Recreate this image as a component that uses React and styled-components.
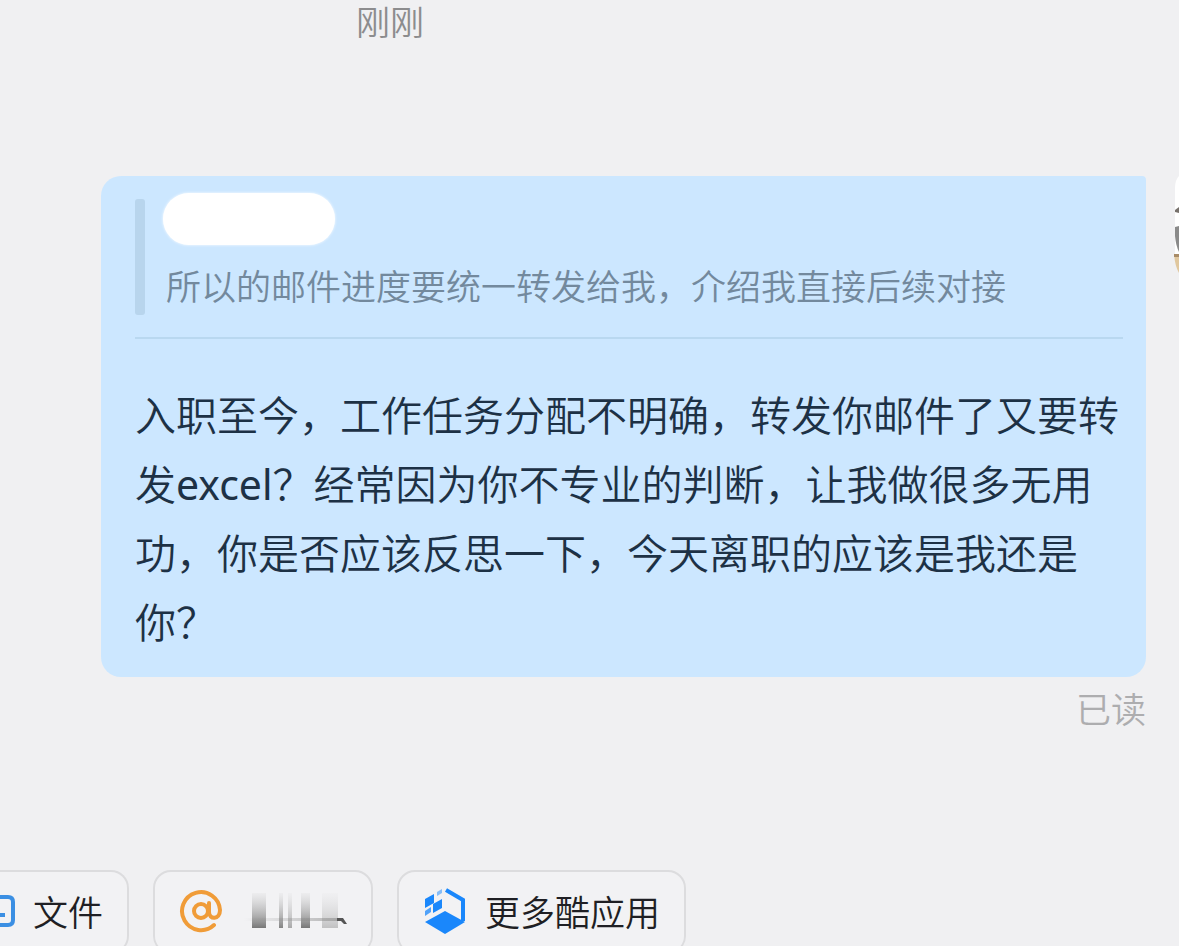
import React from "react";
import styled, { createGlobalStyle } from "styled-components";

const GlobalStyle = createGlobalStyle`
  * { box-sizing: border-box; }
  html, body { margin: 0; background: #f0f0f2; }
  body {
    font-family: "Noto Sans", "Noto Sans CJK SC", sans-serif;
    font-weight: 350;
    overflow: hidden;
  }
`;

const Page = styled.main`
  height: 100vh;
  display: flex;
  flex-direction: column;
  overflow: hidden;
`;

const Time = styled.time`
  padding-left: 356px;
  font-size: 34px;
  line-height: 44px;
  color: #8c8c8e;
`;

const MessageRow = styled.section`
  display: flex;
  gap: 28px;
  margin-top: 132px;
  padding-left: 101px;
`;

const MessageColumn = styled.div`
  flex: 1;
  min-width: 0;
`;

const Bubble = styled.article`
  padding: 17px 23px 20px 34px;
  border-radius: 20px 4px 20px 20px;
  background: #cce7ff;
`;

const Quote = styled.blockquote`
  display: flex;
  gap: 18px;
  margin: 0;
  padding-bottom: 22px;
  border-bottom: 2px solid #b9d8f0;
`;

const QuoteBar = styled.span`
  width: 10px;
  margin-top: 6px;
  border-radius: 3px;
  background: #b8d5ed;
`;

const QuoteBody = styled.div`
  flex: 1;
`;

const HiddenName = styled.div`
  width: 172px;
  height: 52px;
  border-radius: 26px;
  background: #fff;
  box-shadow: 0 0 3px #fff;
`;

const QuoteText = styled.p`
  margin: 14px 0 0 3px;
  font-size: 35px;
  line-height: 56px;
  color: #73899d;
`;

const Text = styled.p`
  margin: 42px 0 0;
  font-family: "Noto Sans", "Noto Sans CJK SC DemiLight", "Noto Sans CJK SC", sans-serif;
  font-size: 41px;
  font-weight: 400;
  line-height: 69px;
  color: #1d3145;
`;

const ReadState = styled.div`
  padding-top: 8px;
  font-size: 35px;
  line-height: 50px;
  text-align: right;
  color: #adadaf;
`;

const AvatarSlot = styled.div`
  flex: 0 0 5px;
  height: 104px;
  overflow: hidden;
`;

const Toolbar = styled.nav`
  display: flex;
  flex: none;
  gap: 24px;
  margin-top: 135px;
`;

const ToolButton = styled.button`
  flex: none;
  display: flex;
  align-items: center;
  gap: 18px;
  height: 84px;
  padding: 0 24px 3px;
  border: 2px solid #dcdcde;
  border-radius: 18px;
  background: #f2f2f4;
  font: inherit;
  font-size: 35px;
  color: #1f1f24;
  ${(p) =>
    p.$clipped &&
    `
    padding-left: 0;
    border-left: 0;
    border-radius: 0 18px 18px 0;
  `}
`;

function Avatar() {
  return (
    <svg width="5" height="104" viewBox="0 0 5 104" aria-hidden="true">
      <path d="M5 0Q1 4 1 12V78H5Z" fill="#fff" />
      <path d="M1 34L5 31V37L1 36Z" fill="#77716c" />
      <path d="M1 51L5 50V76Q2 70 1 60Z" fill="#8a8a8a" />
      <path d="M0 78L5 80V97Q1 90 0 78Z" fill="#e0c79e" />
      <path d="M0 78H5V81H0Z" fill="#a98c68" />
    </svg>
  );
}

function FileIcon() {
  return (
    <svg width="15" height="34" viewBox="0 0 15 34" fill="none" aria-hidden="true">
      <path d="M0 3H8Q13 3 13 8V26Q13 31 8 31H0" stroke="#3b8fe3" strokeWidth="4" />
      <path d="M0 21H5" stroke="#3b8fe3" strokeWidth="4" />
    </svg>
  );
}

function AtIcon() {
  return (
    <svg width="44" height="44" viewBox="0 0 44 44" fill="none" stroke="#f09c38" strokeWidth="4" strokeLinecap="round" aria-hidden="true">
      <circle cx="22" cy="22" r="7" />
      <path d="M30 14V23C30 31 41 31 41 21A19 19 0 1 0 35 36" />
    </svg>
  );
}

function HiddenLabel() {
  const bars = [
    [11, 14, 1],
    [38, 4, 0.9],
    [47, 4, 0.6],
    [60, 9, 1],
    [81, 16, 0.4],
  ];
  return (
    <svg width="106" height="40" viewBox="0 0 106 40" aria-hidden="true">
      <defs>
        <linearGradient id="smear" x1="0" y1="0" x2="0" y2="1">
          <stop offset="0" stopColor="#bbb" stopOpacity="0.1" />
          <stop offset="0.65" stopColor="#999" stopOpacity="0.75" />
          <stop offset="1" stopColor="#777" />
        </linearGradient>
        <linearGradient id="trail" x1="0" y1="0" x2="1" y2="0">
          <stop offset="0" stopColor="#888" stopOpacity="0" />
          <stop offset="1" stopColor="#888" stopOpacity="0.6" />
        </linearGradient>
      </defs>
      {bars.map(([x, w, o]) => (
        <rect key={x} x={x} y="2" width={w} height="35" fill="url(#smear)" opacity={o} />
      ))}
      <rect x="3" y="27" width="98" height="3" fill="url(#trail)" />
      <path d="M96 27H102L106 33H103L100 30H96Z" fill="#555" />
    </svg>
  );
}

function AppsIcon() {
  return (
    <svg width="44" height="48" viewBox="0 0 44 48" fill="#1a87fb" aria-hidden="true">
      <path d="M2 35L22 24L42 35L22 47Z" />
      <path d="M23 3L40 13V34" fill="none" stroke="#1a87fb" strokeWidth="4" />
      <path d="M2 12L11 7V16L2 21Z" />
      <path d="M2 24L8 20V25L2 29Z" opacity="0.75" />
      <path d="M10 17L19 12V21L10 26Z" />
      <path d="M14 5L19 2V6L14 9Z" opacity="0.5" />
    </svg>
  );
}

export default function App() {
  return (
    <Page lang="zh-CN">
      <GlobalStyle />
      <Time>刚刚</Time>
      <MessageRow>
        <MessageColumn>
          <Bubble>
            <Quote>
              <QuoteBar />
              <QuoteBody>
                <HiddenName />
                <QuoteText>所以的邮件进度要统一转发给我，介绍我直接后续对接</QuoteText>
              </QuoteBody>
            </Quote>
            <Text>
              入职至今，工作任务分配不明确，转发你邮件了又要转发excel？经常因为你不专业的判断，让我做很多无用功，你是否应该反思一下，今天离职的应该是我还是你？
            </Text>
          </Bubble>
          <ReadState>已读</ReadState>
        </MessageColumn>
        <AvatarSlot>
          <Avatar />
        </AvatarSlot>
      </MessageRow>
      <Toolbar>
        <ToolButton type="button" $clipped>
          <FileIcon />
          文件
        </ToolButton>
        <ToolButton type="button" aria-label="@">
          <AtIcon />
          <HiddenLabel />
        </ToolButton>
        <ToolButton type="button">
          <AppsIcon />
          更多酷应用
        </ToolButton>
      </Toolbar>
    </Page>
  );
}
